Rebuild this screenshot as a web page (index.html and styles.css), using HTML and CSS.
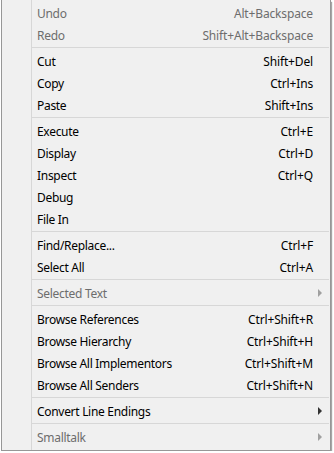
FILE: index.html
```html
<!DOCTYPE html>
<html lang="en">
<head>
    <meta charset="UTF-8">
    <title>Context menu</title>
    <link rel="stylesheet" href="styles.css">
</head>
<body>
	<div id="menu">
		<div class="item off"><span class="label">Undo</span><span class="key">Alt+Backspace</span><span class="sub"></span></div>
		<div class="item off"><span class="label">Redo</span><span class="key">Shift+Alt+Backspace</span><span class="sub"></span></div>
		<div class="sep"></div>
		<div class="item"><span class="label">Cut</span><span class="key">Shift+Del</span><span class="sub"></span></div>
		<div class="item"><span class="label">Copy</span><span class="key">Ctrl+Ins</span><span class="sub"></span></div>
		<div class="item"><span class="label">Paste</span><span class="key">Shift+Ins</span><span class="sub"></span></div>
		<div class="sep"></div>
		<div class="item"><span class="label">Execute</span><span class="key">Ctrl+E</span><span class="sub"></span></div>
		<div class="item"><span class="label">Display</span><span class="key">Ctrl+D</span><span class="sub"></span></div>
		<div class="item"><span class="label">Inspect</span><span class="key">Ctrl+Q</span><span class="sub"></span></div>
		<div class="item"><span class="label">Debug</span><span class="key"></span><span class="sub"></span></div>
		<div class="item"><span class="label">File In</span><span class="key"></span><span class="sub"></span></div>
		<div class="sep"></div>
		<div class="item"><span class="label">Find/Replace...</span><span class="key">Ctrl+F</span><span class="sub"></span></div>
		<div class="item"><span class="label">Select All</span><span class="key">Ctrl+A</span><span class="sub"></span></div>
		<div class="sep"></div>
		<div class="item off"><span class="label">Selected Text</span><span class="key"></span><span class="sub"><i class="arrow"></i></span></div>
		<div class="sep"></div>
		<div class="item"><span class="label">Browse References</span><span class="key">Ctrl+Shift+R</span><span class="sub"></span></div>
		<div class="item"><span class="label">Browse Hierarchy</span><span class="key">Ctrl+Shift+H</span><span class="sub"></span></div>
		<div class="item"><span class="label">Browse All Implementors</span><span class="key">Ctrl+Shift+M</span><span class="sub"></span></div>
		<div class="item"><span class="label">Browse All Senders</span><span class="key">Ctrl+Shift+N</span><span class="sub"></span></div>
		<div class="sep"></div>
		<div class="item"><span class="label">Convert Line Endings</span><span class="key"></span><span class="sub"><i class="arrow"></i></span></div>
		<div class="sep"></div>
		<div class="item off"><span class="label">Smalltalk</span><span class="key"></span><span class="sub"><i class="arrow"></i></span></div>
	</div>
</body>
</html>
```

FILE: styles.css
```css
*{
	padding: 0px;
	margin: 0px;
	box-sizing: border-box;
}
body{
	background-color: #ffffff;
	font-family: "Noto Sans", "Open Sans", sans-serif;
	font-size: 12px;
	color: #000000;
}
#menu{
	width: 330px;
	margin-left: 1px;
	padding: 2px 0px 2px 0px;
	border: 1px solid #979797;
	border-top: none;
	background-color: #f0f0f0;
	/* gutter line left of the labels */
	background-image: linear-gradient(to right, transparent 29px, #d7d7d7 29px, #d7d7d7 30px, transparent 30px);
	box-shadow: 1px 2px 1px rgba(0,0,0,0.35);
}
.item{
	display: flex;
	align-items: center;
	height: 22px;
	padding-left: 35px;
	letter-spacing: -0.3px;
}
.item .label{
	flex: 1;
	white-space: nowrap;
}
.item .key{
	white-space: nowrap;
	letter-spacing: -0.15px;
}
.item .sub{
	width: 17px;
	height: 22px;
	display: flex;
	align-items: center;
	padding-left: 5px;
}
.arrow{
	display: block;
	width: 0px;
	height: 0px;
	border-left: 4px solid #333333;
	border-top: 4px solid transparent;
	border-bottom: 4px solid transparent;
}
.off{
	color: #6d6d6d;
}
.off .arrow{
	border-left-color: #a0a0a0;
}
.sep{
	height: 1px;
	margin: 1px 1px 2px 29px;
	background-color: #d7d7d7;
}
```
